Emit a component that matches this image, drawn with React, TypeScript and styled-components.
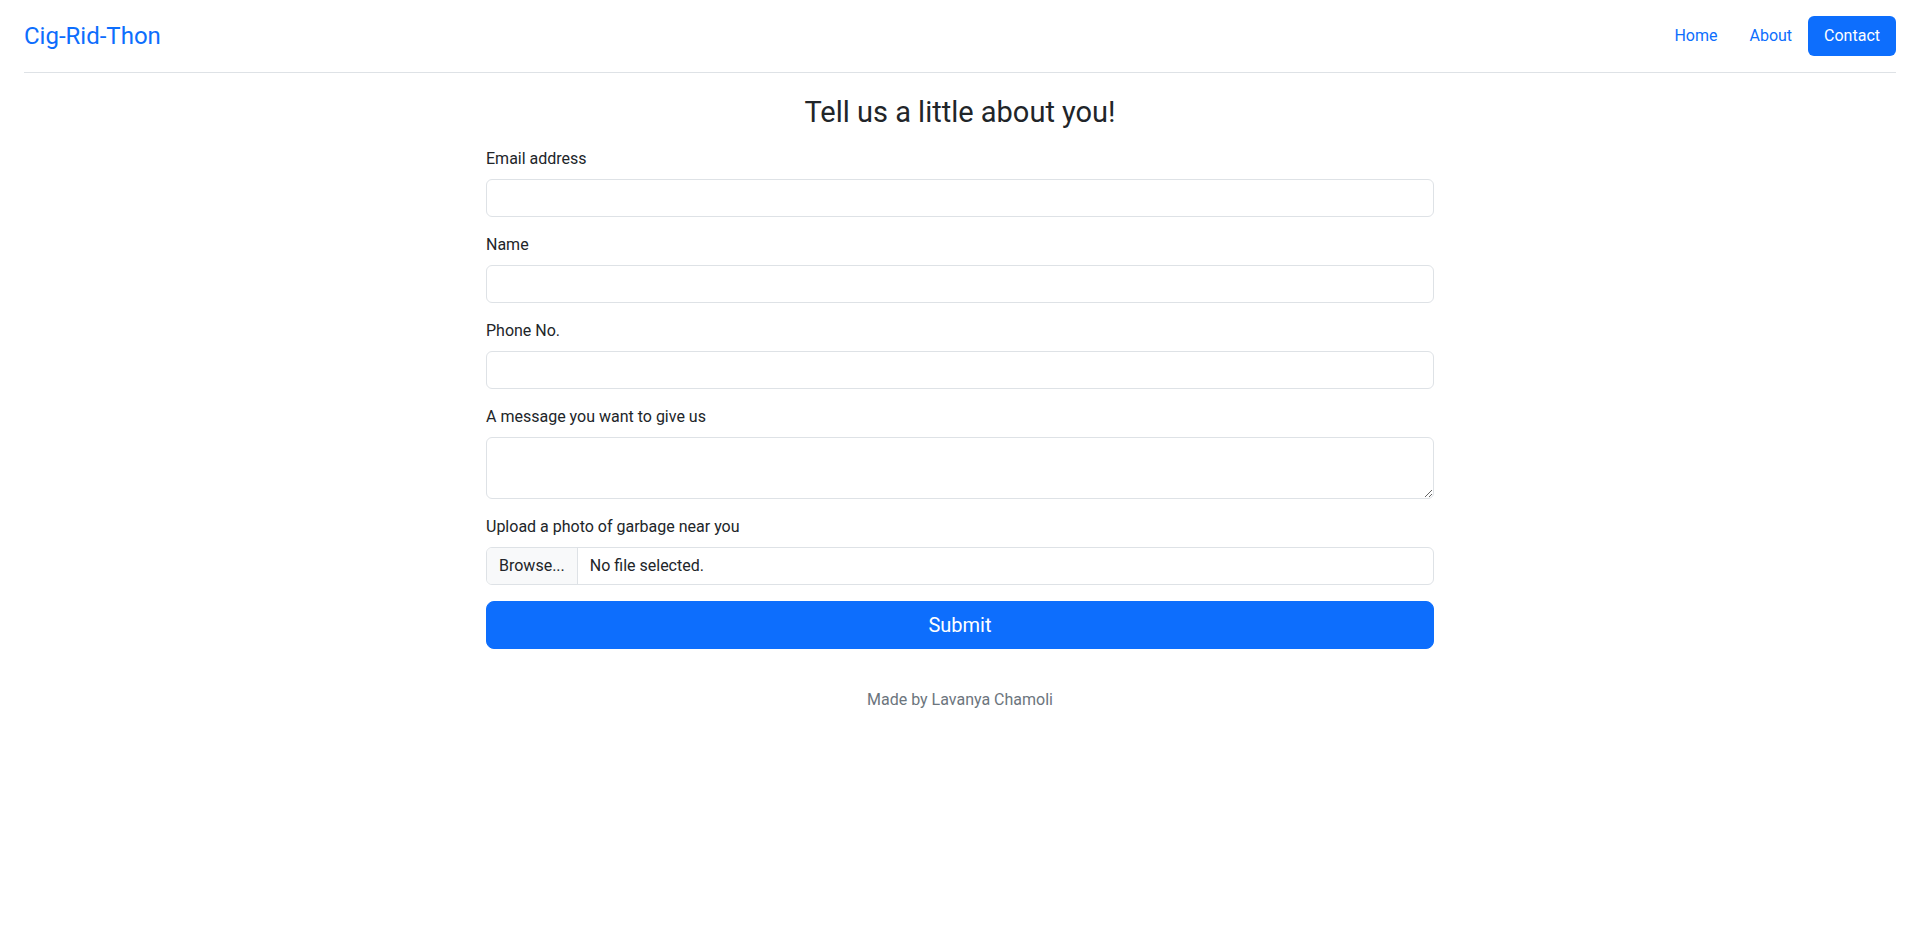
import styled, { createGlobalStyle } from "styled-components";

const GlobalStyle = createGlobalStyle`
  *, *::before, *::after {
    box-sizing: border-box;
  }

  body {
    margin: 0;
    font-family: Roboto, "Noto Sans", sans-serif;
    font-size: 16px;
    line-height: 1.5;
    color: #212529;
    background: #fff;
  }
`;

const Header = styled.header`
  display: flex;
  align-items: center;
  justify-content: space-between;
  margin: 0 24px;
  padding: 16px 0;
  border-bottom: 1px solid #dee2e6;
`;

const Brand = styled.a`
  font-size: 24px;
  line-height: 1.5;
  color: #0d6efd;
  text-decoration: none;
`;

const Nav = styled.nav`
  display: flex;
  align-items: center;
`;

const NavLink = styled.a<{ $active?: boolean }>`
  display: block;
  padding: 8px 16px;
  border-radius: 6px;
  font-size: 16px;
  line-height: 24px;
  text-decoration: none;
  color: ${(p) => (p.$active ? "#fff" : "#0d6efd")};
  background: ${(p) => (p.$active ? "#0d6efd" : "transparent")};
`;

const Main = styled.main`
  max-width: 948px;
  margin: 0 auto;
`;

const Title = styled.h2`
  margin: 22px 0 17px;
  font-size: 29px;
  font-weight: 400;
  line-height: 1.2;
  text-align: center;
`;

const Field = styled.div`
  margin-bottom: 16px;
`;

const Label = styled.label`
  display: block;
  margin-bottom: 8px;
  line-height: 24px;
`;

const Input = styled.input`
  display: block;
  width: 100%;
  height: 38px;
  padding: 6px 12px;
  font: inherit;
  color: #212529;
  background: #fff;
  border: 1px solid #dee2e6;
  border-radius: 6px;
  outline: none;
`;

const TextArea = styled.textarea`
  display: block;
  width: 100%;
  height: 62px;
  padding: 6px 12px;
  font: inherit;
  color: #212529;
  background: #fff;
  border: 1px solid #dee2e6;
  border-radius: 6px;
  outline: none;
`;

const FileBox = styled.label`
  display: flex;
  align-items: stretch;
  height: 38px;
  border: 1px solid #dee2e6;
  border-radius: 6px;
  overflow: hidden;
  cursor: pointer;

  input {
    display: none;
  }
`;

const FileButton = styled.span`
  display: flex;
  align-items: center;
  padding: 0 12px;
  background: #f8f9fa;
  border-right: 1px solid #dee2e6;
`;

const FileName = styled.span`
  display: flex;
  align-items: center;
  padding: 0 12px;
`;

const SubmitButton = styled.button`
  display: block;
  width: 100%;
  height: 48px;
  font-family: inherit;
  font-size: 20px;
  color: #fff;
  background: #0d6efd;
  border: 1px solid #0d6efd;
  border-radius: 8px;
  cursor: pointer;
`;

const Footer = styled.p`
  margin: 39px 0 0;
  text-align: center;
  color: #6c757d;
`;

function App() {
  return (
    <>
      <GlobalStyle />
      <Header>
        <Brand href="#">Cig-Rid-Thon</Brand>
        <Nav>
          <NavLink href="#">Home</NavLink>
          <NavLink href="#">About</NavLink>
          <NavLink href="#" $active>
            Contact
          </NavLink>
        </Nav>
      </Header>

      <Main>
        <Title>Tell us a little about you!</Title>
        <form onSubmit={(e) => e.preventDefault()}>
          <Field>
            <Label htmlFor="email">Email address</Label>
            <Input id="email" type="email" />
          </Field>
          <Field>
            <Label htmlFor="name">Name</Label>
            <Input id="name" type="text" />
          </Field>
          <Field>
            <Label htmlFor="phone">Phone No.</Label>
            <Input id="phone" type="tel" />
          </Field>
          <Field>
            <Label htmlFor="message">A message you want to give us</Label>
            <TextArea id="message" rows={2} />
          </Field>
          <Field>
            <Label htmlFor="photo">Upload a photo of garbage near you</Label>
            <FileBox>
              <input id="photo" type="file" />
              <FileButton>Browse...</FileButton>
              <FileName>No file selected.</FileName>
            </FileBox>
          </Field>
          <SubmitButton type="submit">Submit</SubmitButton>
        </form>
        <Footer>Made by Lavanya Chamoli</Footer>
      </Main>
    </>
  );
}

export default App;
